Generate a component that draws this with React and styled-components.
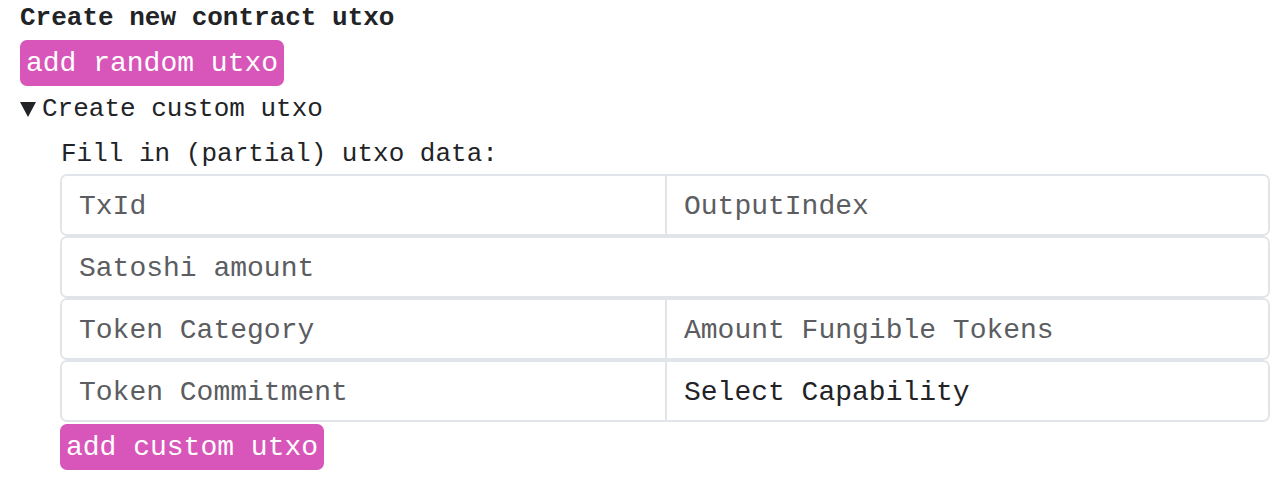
import React from "react";
import styled, { createGlobalStyle } from "styled-components";

const Global = createGlobalStyle`
  html, body { margin: 0; padding: 0; background: #ffffff; }
  body { font-family: "Liberation Mono", "DejaVu Sans Mono", monospace; color: #222326; }
  * { box-sizing: border-box; }
`;

const Page = styled.div`
  padding: 0 0 0 20px;
  width: 1270px;
`;

const Title = styled.h3`
  margin: 0;
  font-size: 26px;
  line-height: 36px;
  font-weight: 700;
  color: #222326;
`;

const PinkButton = styled.button`
  display: block;
  margin-top: ${(p) => p.$top || 0}px;
  height: 46px;
  padding: 0 6px;
  border: none;
  border-radius: 7px;
  background: #d856b9;
  color: #ffffff;
  font-family: inherit;
  font-size: 28px;
  line-height: 48px;
  cursor: pointer;
`;

const Details = styled.details`
  margin-top: 8px;
`;

const Summary = styled.summary`
  list-style: none;
  display: flex;
  align-items: center;
  gap: 6px;
  font-size: 26px;
  line-height: 30px;
  color: #222326;
  cursor: pointer;
  &::-webkit-details-marker { display: none; }
`;

const Marker = styled.span`
  width: 0;
  height: 0;
  border-left: 8px solid transparent;
  border-right: 8px solid transparent;
  border-top: 15px solid #222326;
`;

const Body = styled.div`
  padding-left: 40px;
`;

const Label = styled.div`
  margin-top: 10px;
  font-size: 26px;
  line-height: 40px;
  padding-left: 1px;
  color: #222326;
`;

const Grid = styled.div`
  display: flex;
  flex-direction: column;
`;

const Row = styled.div`
  display: grid;
  grid-template-columns: ${(p) => (p.$single ? "1fr" : "1fr 1fr")};
  height: 62px;
  border: 2px solid #e1e4e8;
  border-radius: 7px;
  overflow: hidden;
`;

const Field = styled.input`
  min-width: 0;
  border: none;
  border-left: ${(p) => (p.$divider ? "2px solid #e1e4e8" : "none")};
  padding: 3px 17px 0;
  font-family: inherit;
  font-size: 28px;
  color: #222326;
  background: #fff;
  outline: none;
  &::placeholder { color: #5b5d61; }
`;

const Select = styled.select`
  min-width: 0;
  border: none;
  border-left: 2px solid #e1e4e8;
  padding: 3px 17px 0;
  font-family: inherit;
  font-size: 28px;
  color: #222326;
  background: #fff;
  appearance: none;
  outline: none;
`;

export default function App() {
  return (
    <Page>
      <Global />
      <Title>Create new contract utxo</Title>
      <PinkButton $top={4}>add random utxo</PinkButton>
      <Details open>
        <Summary>
          <Marker />
          Create custom utxo
        </Summary>
        <Body>
          <Label>Fill in (partial) utxo data:</Label>
          <Grid>
            <Row>
              <Field placeholder="TxId" />
              <Field $divider placeholder="OutputIndex" />
            </Row>
            <Row $single>
              <Field placeholder="Satoshi amount" />
            </Row>
            <Row>
              <Field placeholder="Token Category" />
              <Field $divider placeholder="Amount Fungible Tokens" />
            </Row>
            <Row>
              <Field placeholder="Token Commitment" />
              <Select defaultValue="">
                <option value="">Select Capability</option>
                <option value="none">none</option>
                <option value="mutable">mutable</option>
                <option value="minting">minting</option>
              </Select>
            </Row>
          </Grid>
          <PinkButton $top={2}>add custom utxo</PinkButton>
        </Body>
      </Details>
    </Page>
  );
}
